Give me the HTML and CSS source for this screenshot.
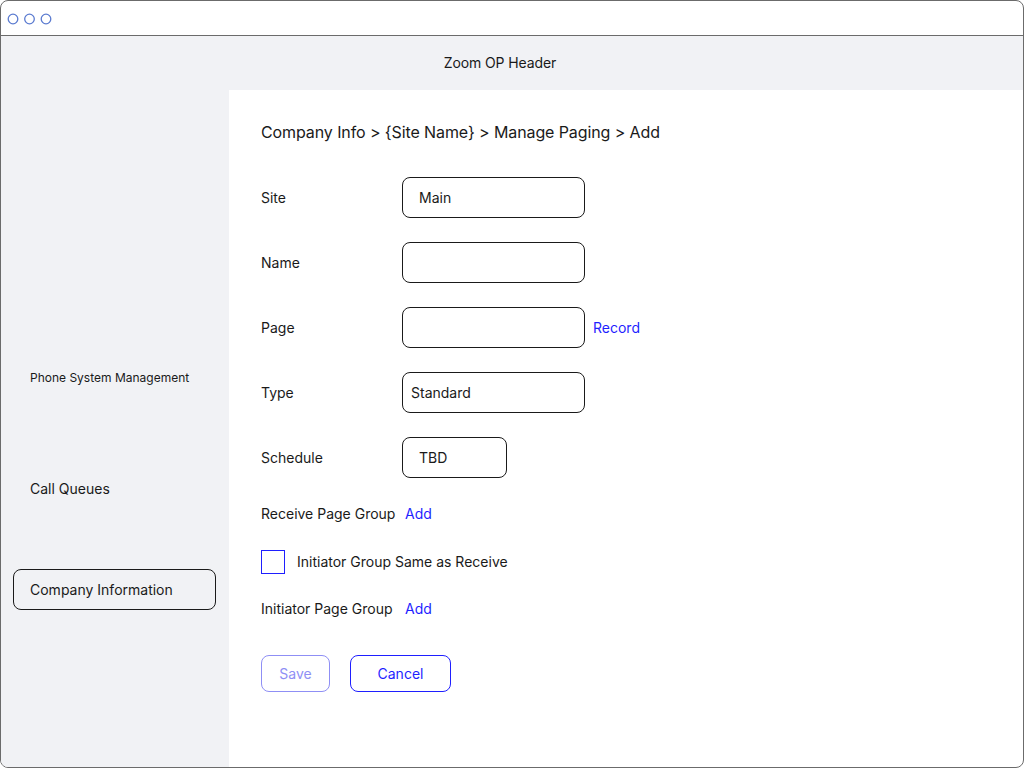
FILE: index.html
```html
<!DOCTYPE html>
<html>
<head>
<meta charset="utf-8">
<link rel="stylesheet" href="styles.css">
</head>
<body>
<div class="frame">
  <div class="titlebar">
    <svg class="dots" width="60" height="14" viewBox="0 0 60 14">
      <circle cx="13" cy="7" r="4.8" fill="none" stroke="#5b7bd0" stroke-width="1.3"/>
      <circle cx="29.5" cy="7" r="4.8" fill="none" stroke="#5b7bd0" stroke-width="1.3"/>
      <circle cx="46" cy="7" r="4.8" fill="none" stroke="#5b7bd0" stroke-width="1.3"/>
    </svg>
  </div>
  <div class="header">Zoom OP Header</div>
  <div class="body">
    <aside class="sidebar">
      <div class="nav-small">Phone System Management</div>
      <div class="nav-item">Call Queues</div>
      <div class="nav-box">Company Information</div>
    </aside>
    <main class="main">
      <div class="crumb">Company Info &gt; {Site Name} &gt; Manage Paging &gt; Add</div>
      <div class="form">
        <div class="row"><div class="label">Site</div><div class="input pad16">Main</div></div>
        <div class="row"><div class="label">Name</div><div class="input"></div></div>
        <div class="row"><div class="label">Page</div><div class="input"></div><a class="link rec">Record</a></div>
        <div class="row"><div class="label">Type</div><div class="input pad8">Standard</div></div>
        <div class="row"><div class="label">Schedule</div><div class="input small pad16">TBD</div></div>
      </div>
      <div class="line first"><span class="lab2">Receive Page Group</span><a class="link">Add</a></div>
      <div class="check"><span class="box"></span><span class="check-text">Initiator Group Same as Receive</span></div>
      <div class="line"><span class="lab2">Initiator Page Group</span><a class="link">Add</a></div>
      <div class="buttons">
        <button class="btn save">Save</button>
        <button class="btn cancel">Cancel</button>
      </div>
    </main>
  </div>
</div>
</body>
</html>
```

FILE: styles.css
```css
* { box-sizing: border-box; }
html, body { margin: 0; padding: 0; background: #fff; }
body { font-family: Inter, "Noto Sans", sans-serif; color: #1a1a1a; }

.frame {
  width: 1024px;
  height: 768px;
  border: 1px solid #6b6b6b;
  border-radius: 8px;
  overflow: hidden;
  display: flex;
  flex-direction: column;
  background: #fff;
}
.titlebar {
  height: 35px;
  border-bottom: 1px solid #6b6b6b;
  display: flex;
  align-items: center;
  padding-top: 1px;
}
.dots { display: block; margin-left: -1px; }
.header {
  height: 54px;
  background: #f1f2f5;
  display: flex;
  align-items: center;
  justify-content: center;
  font-size: 14px;
  padding-right: 24px;
  padding-bottom: 2px;
  letter-spacing: -0.1px;
}
.body { flex: 1; display: flex; }
.sidebar {
  width: 228px;
  background: #f1f2f5;
  padding-top: 280px;
  display: flex;
  flex-direction: column;
}
.nav-small { font-size: 12px; line-height: 16px; padding-left: 29px; }
.nav-item { font-size: 14px; line-height: 20px; padding-left: 29px; margin-top: 93px; }
.nav-box {
  margin: 70px 0 0 12px;
  width: 203px;
  height: 41px;
  border: 1px solid #1a1a1a;
  border-radius: 8px;
  font-size: 14px;
  display: flex;
  align-items: center;
  padding-left: 16px;
}
.main { flex: 1; padding: 32px 0 0 32px; }
.crumb { font-size: 16px; line-height: 20px; letter-spacing: -0.1px; }
.form { margin-top: 35px; display: flex; flex-direction: column; gap: 24px; }
.row { display: flex; align-items: center; height: 41px; font-size: 14px; }
.label { width: 141px; }
.input {
  width: 183px;
  height: 41px;
  border: 1px solid #1a1a1a;
  border-radius: 8px;
  display: flex;
  align-items: center;
}
.input.small { width: 105px; }
.pad16 { padding-left: 16px; }
.pad8 { padding-left: 8px; }
.link { color: #1f1fff; font-size: 14px; cursor: pointer; }
.rec { margin-left: 8px; }
.line { font-size: 14px; line-height: 20px; display: flex; margin-top: 25px; }
.line.first { margin-top: 26px; }
.lab2 { width: 144px; }
.check { display: flex; align-items: center; margin-top: 26px; font-size: 14px; }
.check-text { line-height: 20px; padding-bottom: 0; }
.box { width: 24px; height: 24px; border: 1px solid #1f1fff; margin-right: 12px; }
.buttons { display: flex; gap: 20px; margin-top: 36px; }
.btn {
  height: 37px;
  border-radius: 8px;
  background: #fff;
  font-family: Inter, "Noto Sans", sans-serif;
  font-size: 14px;
  padding: 0;
}
.save { width: 69px; border: 1px solid #8f8ff5; color: #8f8ff5; }
.cancel { width: 101px; border: 1px solid #1f1fff; color: #1f1fff; }
```
